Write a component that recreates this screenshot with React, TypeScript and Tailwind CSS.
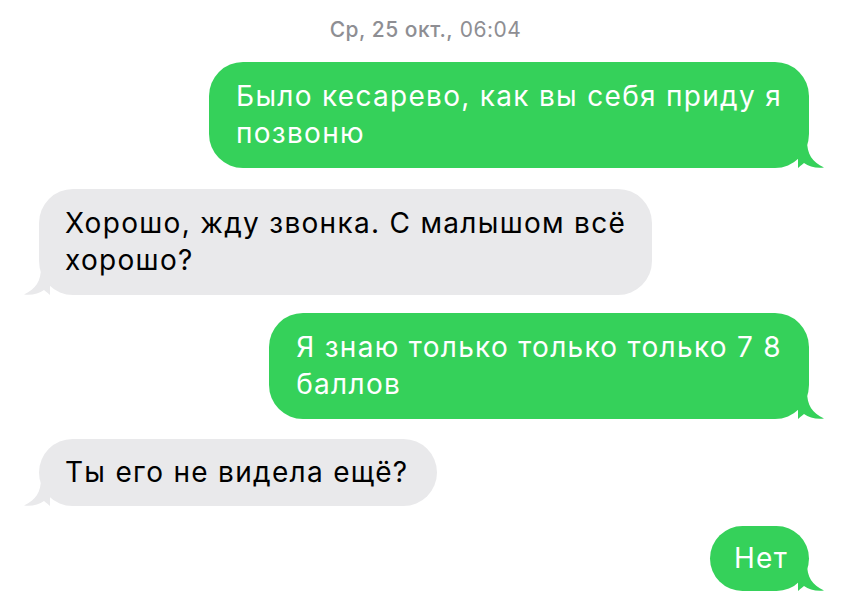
import React from "react";

const GREEN = "#35d15a";
const GRAY = "#e9e9eb";

function TailRight({ color }: { color: string }) {
  return (
    <svg className="absolute bottom-0 right-[-17px]" width="28" height="28" viewBox="0 0 28 28">
      <path d="M0 0 H9 C9 14 14 22 26 27.5 C18 28.5 11 26.5 6 23 C3 25.5 1 27 0 28 Z" fill={color} />
    </svg>
  );
}

function TailLeft({ color }: { color: string }) {
  return (
    <svg className="absolute bottom-0 left-[-17px]" width="28" height="28" viewBox="0 0 28 28">
      <path d="M28 0 H19 C19 14 14 22 2 27.5 C10 28.5 17 26.5 22 23 C25 25.5 27 27 28 28 Z" fill={color} />
    </svg>
  );
}

function Sent({ children, single }: { children: React.ReactNode; single?: boolean }) {
  return (
    <div className="flex justify-end pr-[42px]">
      <div
        className={
          "relative rounded-[34px] bg-[#35d15a] text-white " +
          (single ? "py-[14px] pl-[24px] pr-[21px]" : "py-[16px] px-[27px]")
        }
      >
        <TailRight color={GREEN} />
        <div className="relative">{children}</div>
      </div>
    </div>
  );
}

function Received({ children, single }: { children: React.ReactNode; single?: boolean }) {
  return (
    <div className="flex justify-start pl-[39px]">
      <div
        className={
          "relative rounded-[34px] bg-[#e9e9eb] text-black " +
          (single ? "py-[15px] pl-[26px] pr-[29px]" : "py-[16px] px-[26px]")
        }
      >
        <TailLeft color={GRAY} />
        <div className="relative">{children}</div>
      </div>
    </div>
  );
}

export default function App() {
  return (
    <div
      className="w-[851px] h-[600px] overflow-hidden bg-white flex flex-col"
      style={{ fontFamily: "Inter, 'Noto Sans', sans-serif" }}
    >
      <div className="pt-[16px] text-center text-[21px] leading-[28px] tracking-[0.5px] text-[#8e8e93]">
        <span className="font-medium">Ср, 25 окт.,</span> 06:04
      </div>
      <div className="mt-[18px] flex flex-col text-[28px] leading-[37px] tracking-[1.3px] whitespace-nowrap">
        <Sent>
          Было кесарево, как вы себя приду я
          <br />
          позвоню
        </Sent>
        <div className="h-[21px]" />
        <Received>
          Хорошо, жду звонка. С малышом всё
          <br />
          хорошо?
        </Received>
        <div className="h-[18px]" />
        <Sent>
          Я знаю только только только 7 8
          <br />
          баллов
        </Sent>
        <div className="h-[20px]" />
        <Received single>Ты его не видела ещё?</Received>
        <div className="h-[20px]" />
        <Sent single>Нет</Sent>
      </div>
    </div>
  );
}
